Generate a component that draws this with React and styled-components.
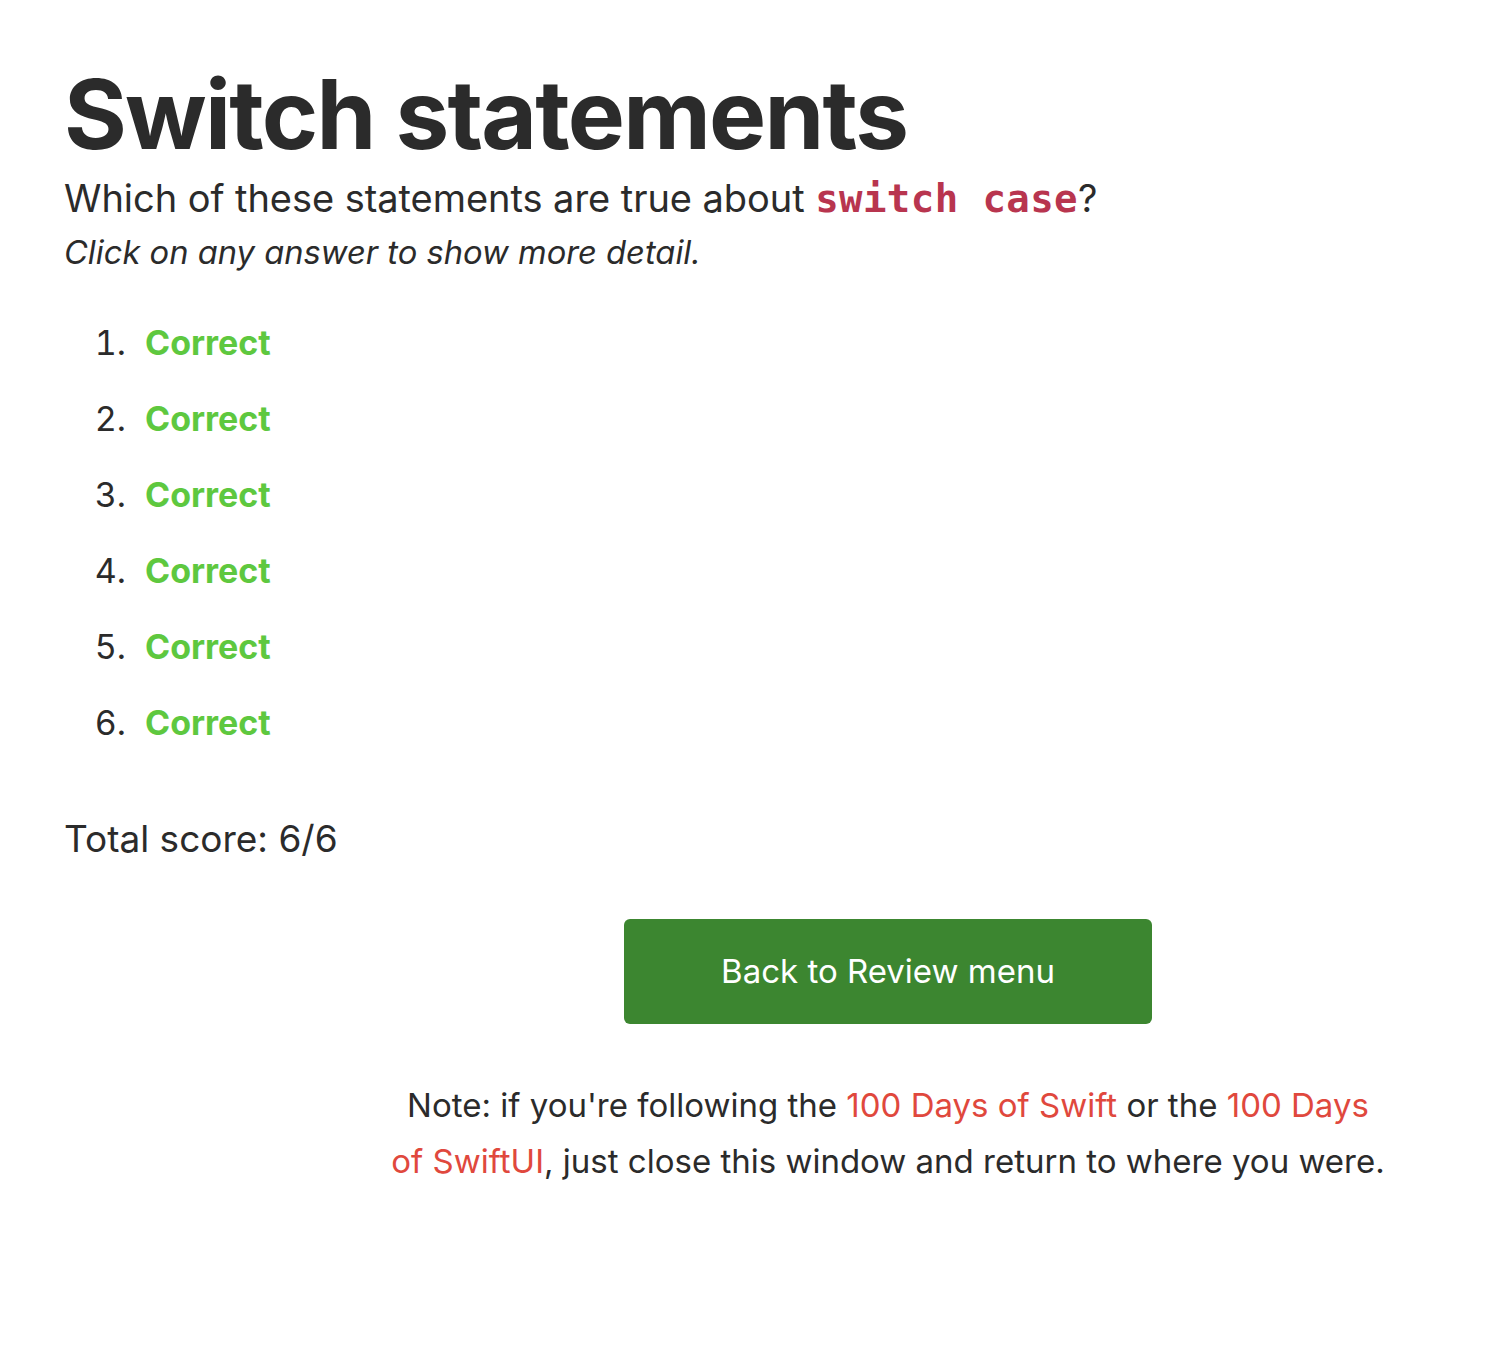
import React from "react";
import styled, { createGlobalStyle } from "styled-components";

const Global = createGlobalStyle`
  html, body { margin: 0; padding: 0; background: #ffffff; }
  body {
    font-family: Inter, "Noto Sans", "Liberation Sans", sans-serif;
    color: #2b2b2b;
    overflow-x: hidden;
  }
`;

const Page = styled.main`
  padding: 62px 0 120px 64px;
  display: flex;
  flex-direction: column;
`;

const Title = styled.h1`
  margin: 0;
  font-size: 96px;
  font-weight: 700;
  letter-spacing: -1.75px;
  line-height: 1.1;
  color: #2b2b2b;
`;

const Question = styled.p`
  margin: 6px 0 0;
  font-size: 38px;
  line-height: 48px;
  letter-spacing: -0.05px;
`;

const Code = styled.code`
  font-family: "DejaVu Sans Mono", "Liberation Mono", monospace;
  font-weight: 700;
  color: #b8354f;
  font-size: 39px;
  letter-spacing: 0.4px;
`;

const Hint = styled.p`
  margin: 8px 0 0;
  font-size: 32.7px;
  font-style: italic;
  line-height: 43px;
`;

const Answers = styled.ol`
  margin: 49px 0 0;
  padding-left: 71px;
  display: flex;
  flex-direction: column;
  gap: 36px;
  font-size: 34px;
  line-height: 40px;
`;

const Answer = styled.li`
  padding-left: 10px;
  &::marker { color: #2b2b2b; }
`;

const Verdict = styled.span`
  font-weight: 700;
  color: ${(p) => (p.$ok ? "#5ec83f" : "#d9433a")};
`;

const Score = styled.p`
  margin: 72px 0 0;
  font-size: 37px;
  line-height: 48px;
`;

const Footer = styled.section`
  width: 1000px;
  margin: 56px 0 0 324px;
  display: flex;
  flex-direction: column;
  align-items: center;
`;

const Button = styled.button`
  width: 528px;
  height: 105px;
  border: none;
  border-radius: 6px;
  background: #3c8630;
  color: #ffffff;
  font-family: Inter, "Noto Sans", sans-serif;
  font-size: 33px;
  font-weight: 400;
  cursor: pointer;
`;

const Note = styled.p`
  margin: 53px 0 0;
  text-align: center;
  font-size: 33px;
  line-height: 56px;
`;

const Link = styled.a`
  color: #e0483d;
  text-decoration: none;
`;

export default function App() {
  const answers = Array.from({ length: 6 }, () => true);
  return (
    <>
      <Global />
      <Page>
        <Title>Switch statements</Title>
        <Question>
          Which of these statements are true about <Code>switch case</Code>?
        </Question>
        <Hint>Click on any answer to show more detail.</Hint>
        <Answers>
          {answers.map((ok, i) => (
            <Answer key={i}>
              <Verdict $ok={ok}>{ok ? "Correct" : "Wrong"}</Verdict>
            </Answer>
          ))}
        </Answers>
        <Score>Total score: 6/6</Score>
        <Footer>
          <Button>Back to Review menu</Button>
          <Note>
            Note: if you're following the <Link href="#">100 Days of Swift</Link> or the{" "}
            <Link href="#">100 Days of SwiftUI</Link>, just close this window and return to where you were.
          </Note>
        </Footer>
      </Page>
    </>
  );
}
